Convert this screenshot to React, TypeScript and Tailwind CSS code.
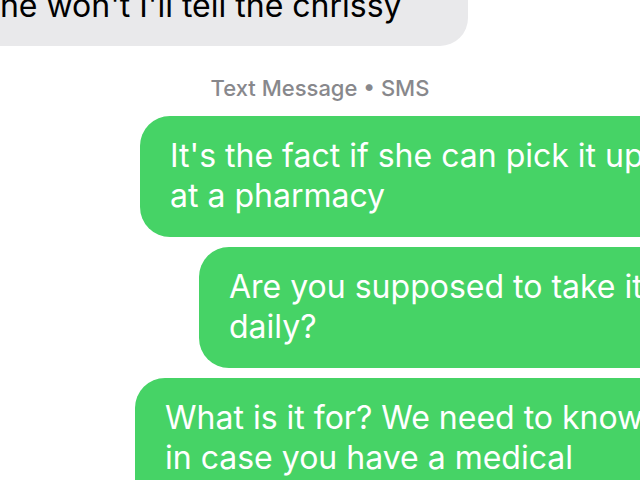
import React from "react";

type Bubble = {
  lines: string[];
  indent: string;
};

// outgoing SMS bubbles, each one pushed in from the left and running off the right edge
const outgoing: Bubble[] = [
  { lines: ["It's the fact if she can pick it up", "at a pharmacy"], indent: "ml-[140px]" },
  { lines: ["Are you supposed to take it", "daily?"], indent: "ml-[199px]" },
  { lines: ["What is it for? We need to know", "in case you have a medical", "emergency"], indent: "ml-[135px]" },
];

export default function App() {
  return (
    <div
      className="w-[640px] h-[480px] overflow-hidden bg-white flex flex-col"
      style={{ fontFamily: "Inter, 'Liberation Sans', sans-serif" }}
    >
      {/* last incoming message, scrolled mostly out of view */}
      <div className="self-start -mt-[34px] -ml-[40px] w-[508px] rounded-[28px] bg-[#e9e9eb] pl-[23px] pt-[20px] pb-[20px]">
        <p className="text-[32px] leading-[40px] text-black whitespace-nowrap">she won't I'll tell the chrissy</p>
      </div>

      <div className="mt-[29px] text-center text-[22px] leading-[26px] font-medium text-[#88888c]">
        Text Message • SMS
      </div>

      <div className="mt-[15px] flex flex-col gap-[10px]">
        {outgoing.map((b, i) => (
          <div
            key={i}
            className={`${b.indent} w-[620px] shrink-0 rounded-[30px] bg-[#46d366] pl-[30px] pt-[20px] pb-[21px]`}
          >
            {b.lines.map((line, j) => (
              <p key={j} className="text-[32px] leading-[40px] text-white whitespace-nowrap">
                {line}
              </p>
            ))}
          </div>
        ))}
      </div>
    </div>
  );
}
